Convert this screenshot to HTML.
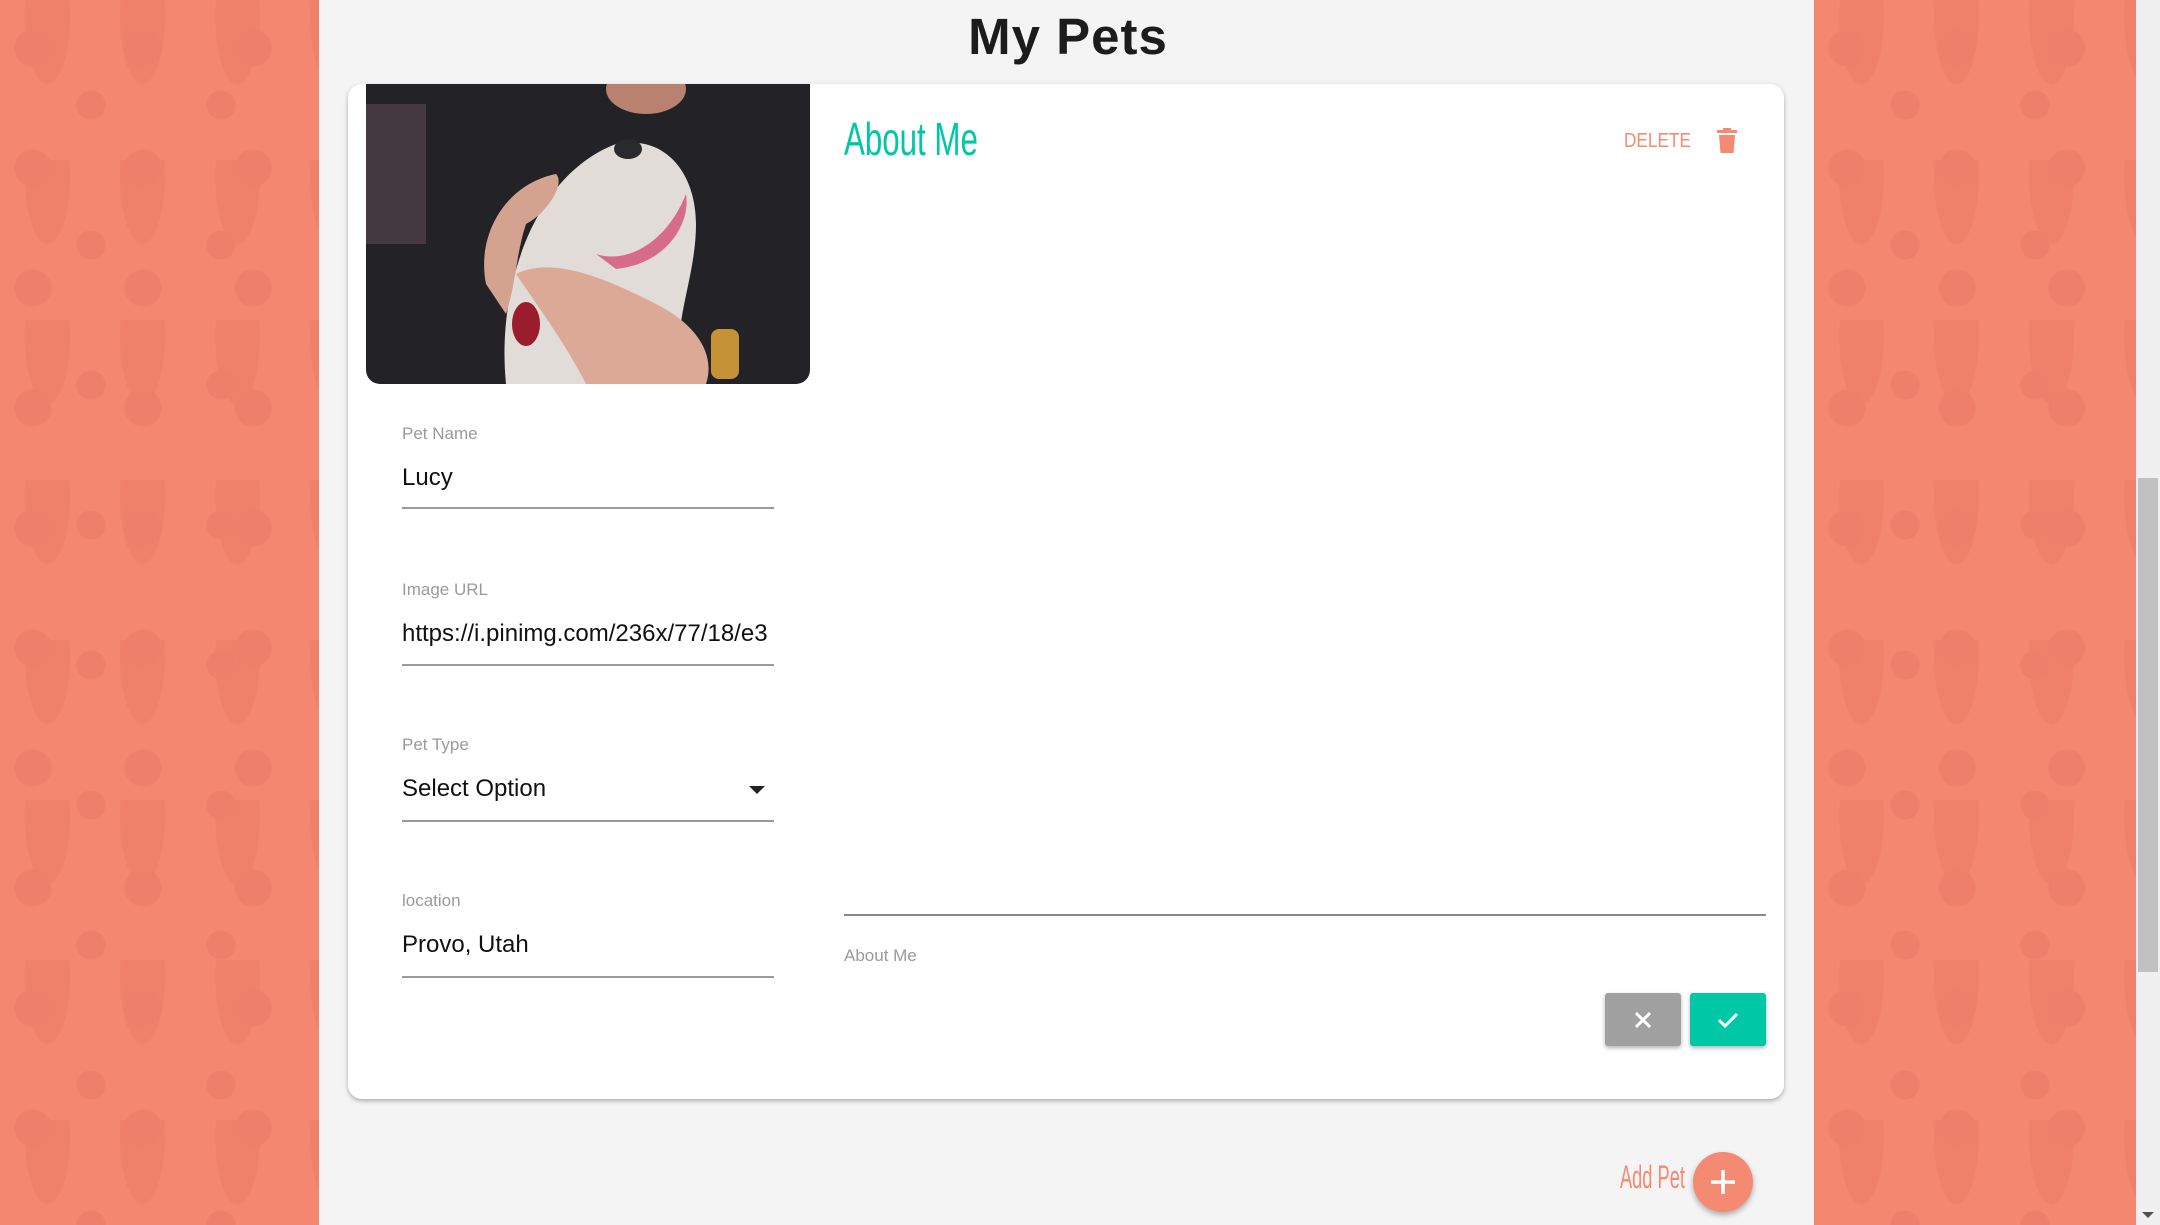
<!DOCTYPE html>
<html><head><meta charset="utf-8"><style>
*{margin:0;padding:0;box-sizing:border-box}
body{width:2160px;height:1225px;overflow:hidden;background:#f4f4f4;font-family:"Liberation Sans",sans-serif;position:relative}
.side{position:absolute;top:0;height:1225px;background:#f4876f;
background-image:radial-gradient(circle at 30% 40%,#ee7f6a 0 18px,transparent 19px),radial-gradient(circle at 70% 75%,#ee7f6a 0 14px,transparent 15px),radial-gradient(ellipse at 50% 10%,#ef816b 0 22px,transparent 23px);
background-size:110px 120px,130px 140px,95px 160px}
.lab{position:absolute;left:402px;font-size:17px;color:#9a9a9a}
.val{position:absolute;left:402px;font-size:24px;color:#111;white-space:nowrap;overflow:hidden;width:372px}
.line{position:absolute;left:402px;width:372px;height:2px;background:#9a9a9a}
.narrow{display:inline-block;transform-origin:left center;white-space:nowrap}
</style></head><body>
<div class="side" style="left:0;width:319px"></div>
<div class="side" style="left:1814px;width:322px"></div>
<div style="position:absolute;left:2136px;top:0;width:24px;height:1225px;background:#f0f0f0"></div>
<div style="position:absolute;left:2138px;top:478px;width:20px;height:494px;background:#c1c1c1"></div>
<div style="position:absolute;left:2142px;top:1212px;width:0;height:0;border-left:6px solid transparent;border-right:6px solid transparent;border-top:6px solid #505050"></div>

<div style="position:absolute;left:0;width:2136px;top:7px;text-align:center;font-size:51px;font-weight:bold;color:#1c1c1c;letter-spacing:1px">My Pets</div>

<div style="position:absolute;left:348px;top:84px;width:1436px;height:1015px;background:#fff;border-radius:14px;box-shadow:0 2px 5px rgba(0,0,0,.3)"></div>

<svg style="position:absolute;left:366px;top:84px;border-radius:0 0 14px 14px" width="444" height="300" viewBox="0 0 444 300">
<rect width="444" height="300" fill="#222227"/>
<rect width="60" height="140" y="20" fill="#5a4a50" opacity=".6"/>
<ellipse cx="280" cy="5" rx="40" ry="25" fill="#b98270"/>
<path d="M140 300 C130 200 170 90 250 60 C300 50 330 90 330 140 C330 200 300 250 320 300Z" fill="#e2dcd8"/>
<path d="M230 170 C260 180 300 160 320 110 C325 140 300 180 250 185Z" fill="#d86c88"/>
<ellipse cx="262" cy="65" rx="14" ry="10" fill="#2a2a2e"/>
<path d="M120 200 C110 150 140 100 190 90 C200 100 180 130 160 140 C150 170 150 200 140 230Z" fill="#d4a38f"/>
<path d="M150 190 C190 170 250 200 290 220 C330 240 350 270 340 300 L220 300 C200 260 170 220 150 190Z" fill="#dba995"/>
<rect x="345" y="245" width="28" height="50" rx="8" fill="#c59238"/>
<ellipse cx="160" cy="240" rx="14" ry="22" fill="#9b1c2c"/>
</svg>

<div class="lab" style="top:424px">Pet Name</div>
<div class="val" style="top:464px">Lucy</div>
<div class="line" style="top:507px"></div>
<div class="lab" style="top:580px">Image URL</div>
<div class="val" style="top:620px">https://i.pinimg.com/236x/77/18/e3</div>
<div class="line" style="top:664px"></div>
<div class="lab" style="top:735px">Pet Type</div>
<div class="val" style="top:775px">Select Option</div>
<div style="position:absolute;left:749px;top:786px;border-left:8px solid transparent;border-right:8px solid transparent;border-top:8px solid #222"></div>
<div class="line" style="top:820px"></div>
<div class="lab" style="top:891px">location</div>
<div class="val" style="top:931px">Provo, Utah</div>
<div class="line" style="top:976px"></div>

<div style="position:absolute;left:844px;top:112px;font-size:46px;color:#00c8a6"><span class="narrow" style="transform:scaleX(.68)">About Me</span></div>
<div style="position:absolute;left:1624px;top:130px;font-size:20px;color:#f58a72"><span class="narrow" style="transform:scaleX(.86)">DELETE</span></div>
<svg style="position:absolute;left:1716px;top:128px" width="22" height="26" viewBox="0 0 22 26"><rect x="1" y="2" width="20" height="3" fill="#f58a72"/><rect x="7" y="0" width="8" height="3" fill="#f58a72"/><path d="M3 7h16l-1.5 18h-13z" fill="#f58a72"/></svg>

<div style="position:absolute;left:844px;top:914px;width:922px;height:2px;background:#888"></div>
<div class="lab" style="left:844px;top:946px">About Me</div>

<div style="position:absolute;left:1605px;top:993px;width:76px;height:53px;background:#a0a0a0;border-radius:3px;box-shadow:0 2px 4px rgba(0,0,0,.3)">
<svg width="76" height="53"><path d="M31 20l14 14M45 20l-14 14" stroke="#fff" stroke-width="3"/></svg></div>
<div style="position:absolute;left:1690px;top:993px;width:76px;height:53px;background:#00c8a6;border-radius:3px;box-shadow:0 2px 4px rgba(0,0,0,.3)">
<svg width="76" height="53"><path d="M29 27l6 6 12-12" stroke="#fff" stroke-width="3" fill="none"/></svg></div>

<div style="position:absolute;left:1620px;top:1159px;font-size:32px;color:#f58a72"><span class="narrow" style="transform:scaleX(.57)">Add Pet</span></div>
<div style="position:absolute;left:1693px;top:1152px;width:60px;height:60px;border-radius:50%;background:#f58a72;box-shadow:0 3px 6px rgba(0,0,0,.3)">
<svg width="60" height="60"><path d="M30 18v24M18 30h24" stroke="#fff" stroke-width="3.5"/></svg></div>
</body></html>
